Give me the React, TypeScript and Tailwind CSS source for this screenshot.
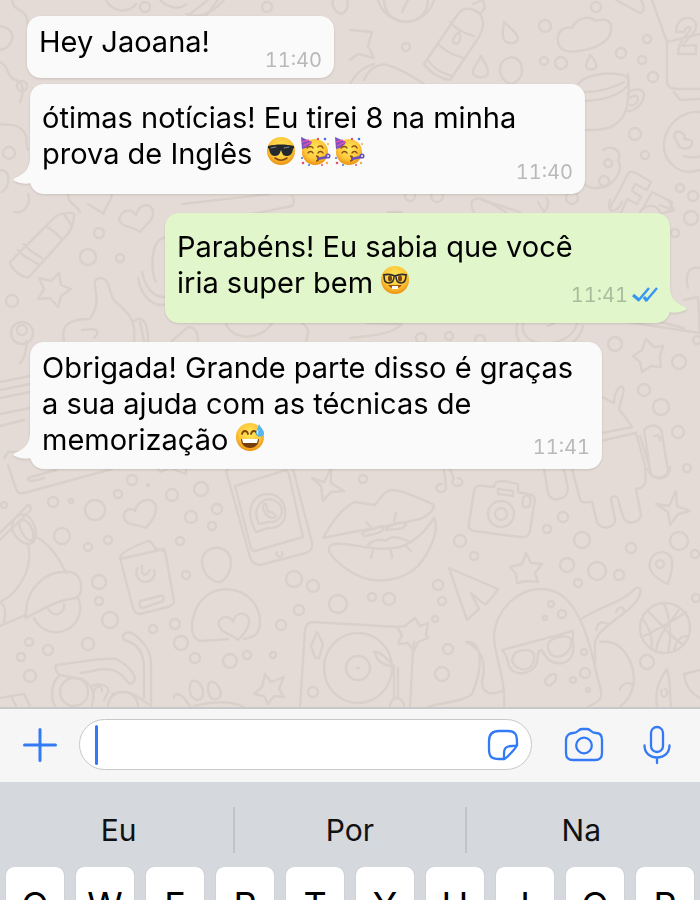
import { ReactNode } from "react";
import clsx from "clsx";

const dots = [
    [145, 7, 5], [267, 7, 5], [22, 86, 5], [9, 153, 6], [596, 7, 5], [545, 26, 6], [406, 47, 4], [544, 61, 4],
    [561, 63, 6], [621, 53, 5], [647, 39, 4], [642, 60, 4], [653, 77, 5], [635, 134, 6], [645, 155, 4],
    [680, 188, 4], [693, 196, 5], [572, 198, 6], [437, 196, 6], [410, 196, 5], [691, 218, 7], [675, 233, 4],
    [615, 344, 7], [679, 362, 7], [644, 390, 6], [661, 407, 8], [678, 432, 6], [687, 468, 4], [421, 338, 5],
    [449, 336, 4], [480, 340, 5], [697, 340, 4], [99, 233, 5], [88, 257, 8], [120, 258, 4], [12, 301, 6],
    [22, 333, 11], [22, 330, 5], [4, 505, 3], [53, 502, 5], [71, 501, 2], [95, 510, 10], [62, 536, 8],
    [88, 547, 4], [108, 540, 4], [118, 494, 4], [132, 480, 5], [148, 485, 1], [172, 495, 6], [201, 489, 7],
    [191, 517, 6], [217, 509, 5], [212, 526, 4], [180, 541, 4], [99, 582, 7], [99, 601, 4], [110, 620, 8],
    [186, 575, 4], [153, 629, 4], [175, 624, 5], [181, 643, 7], [88, 644, 6], [48, 650, 5], [29, 642, 4],
    [21, 657, 4], [30, 676, 6], [195, 658, 5], [230, 661, 7], [247, 655, 4], [273, 655, 3], [294, 579, 8],
    [313, 586, 6], [338, 604, 9], [299, 610, 5], [281, 625, 5], [313, 692, 5], [363, 479, 4], [460, 541, 6],
    [474, 556, 4], [547, 529, 4], [563, 517, 5], [582, 540, 8], [631, 548, 5], [679, 541, 9], [695, 554, 4],
    [567, 565, 7], [578, 583, 4], [597, 571, 9], [619, 575, 5], [372, 597, 4], [389, 599, 6], [438, 585, 5],
    [442, 601, 4], [435, 619, 3], [448, 649, 5], [442, 674, 7], [647, 662, 7], [551, 604, 3], [562, 614, 4],
    [545, 618, 2], [584, 652, 3], [585, 673, 5], [573, 680, 3], [588, 690, 2], [696, 598, 4],
];

const doodles = [
    // top edge: clouds, flames, badge, bottle, drops
    "M12 0c2 12 10 8 14 16s-2 14 8 18 8 14 18 14M0 26c14 2 16 14 6 22L0 50",
    "M0 62c10 4 6 16 16 18 8 2 8 12 4 22M106 0c6 12 22 14 30 4M160 0c8 8 20 10 26 4M190 14l18-14M206 16l12-16",
    "M186 14c10 4 24 2 38-14M333 0c-2 6 2 12 8 14 6-2 8-8 6-14M350 30l22 2-4 14 6 12-16-4-8 6",
    "M378 0a29 29 0 0 0 56 0M384 0a22 22 0 0 0 44 0M402 12l6-12",
    "M424 64l34-50c8-10 24-4 25 8 1 7-3 13-6 18l-27 40c-8-1-20-7-26-16zM428 60c6 10 16 14 24 16M438 44c8 8 18 12 25 14M450 22c7 8 16 12 24 14M473 4l10-4 2 8-4 5M455 44c-5-3 0-9 4-12 2 4 2 12-4 12z",
    "M504 22c6 6 13 10 14 16 0 7-14 7-15-1-1-6 1-10 1-15zM481 56c4 7 7 11 7 16 0 7-15 7-15 0 0-6 6-10 8-16z",
    "M590 55c6 6 7 9 6 12-2 4-9 3-10-1 0-4 3-7 4-11zM500 70c0-16 22-18 22 0 0 8-6 13-11 14-6-2-11-7-11-14z",
    "M350 84c8-14 16-18 24-20M364 80c6-14 18-18 26-14 14 4 24 12 34 18",
    "M558 42c-2-12 8-16 14-14 6-12 18-12 24-7 10-4 16 1 15 8 0 14-18 20-32 22-12 2-20-1-21-9z",
    // cup, jersey, smiley
    "M578 84c6-8 24-12 40-10 12 1 11 8 9 12-8 10-24 14-42 15M628 74c2 12 0 26-1 32-4 18-18 24-34 24h-8M585 92c14 0 28-4 39-10M627 94c6-6 15-6 17 0 0 10-10 18-18 17M630 98c6-4 8-2 8 1 0 4-4 7-8 6",
    "M652 0l15 42v40c0 6 6 7 12 7h21M667 42l33-8M674 92l6 8 20-1M676 32c0-16 17-18 20-8 2 7-8 14-14 22l14-1v9h-18c0-12 8-18 12-24 2-4-4-4-6 2z",
    "M700 112c-32-2-48 38-26 54 8 8 20 6 26 4M676 132c6-2 10 4 8 6s10 0 8 6-12 6-14 0-6-4-2-12M684 156c8 2 12 2 16 0M616 0l22 12c5 3 6-3 5-8l-2-4",
    "M603 150c8-6 20 0 15 11 4 5 2 14-6 21-6 8-26 8-28 0M600 178a5 5 0 1 0 1-1M605 161a4 4 0 1 0 1-1M610 208l18-34c2-4 5-2 10 0l13 8-4 8-12-6-3 7 9 6-4 7-10-5-6 14M642 210l10-18 20 10-2 7-10-4",
    // left side: smoke, pencil, heart, star
    "M0 124c6 2 16-2 22 6 8 6 2 14 6 20M0 170c12 0 10 16 2 22M28 194c4 10-4 20-14 18M68 194c0 10 8 10 12 18M112 194c-2 12-10 16-8 20l-16-10M182 204l88-10M212 222l80-16c3-3 2-8 0-10",
    "M10 262l44-44c4-5 18-6 20-4 1 6-4 18-8 22l-36 40c-4 6-20-8-20-14zM18 250c6 8 14 10 20 14M24 244c6 8 12 10 18 14M46 226c6 4 12 8 16 14M64 214l8 12",
    "M140 232c-8-6-26-6-19-17 4-7 12-5 15 0 4-13 16-12 17-3 1 9-9 14-13 20z",
    "M59 273l2 12 10 4-10 7-3 11-8-9-12 1 6-10-5-11 12 3z",
    "M168 238c-18-4-18 34-12 44M142 272c4 20 16 28 28 24M138 278c4 22 18 30 30 26",
    // raised hand
    "M64 341c-4-18 8-22 26-22 16-24-4-38 10-41 12 0 8 20 16 24 16 14 20 20 18 40M82 330c14-2 20 0 12 8M134 321c8-6 14 0 14 20M140 322l4 19M172 341l16-14c8 0 10 6 10 14",
    "M0 382l30-6M0 390l30-6M0 398l30-6M0 414l30-6M0 426l24-6M4 458l4-6 16 0M26 341c2 14-6 22-6 22",
    // centre strip between bubbles
    "M226 324c6 16 34 18 46-1M306 341c4-10 2-14-4-18M366 323l34 1M350 338c14-2 40-2 52-14M517 324c-8 40 60 34 66 2M523 324c-4 26 46 26 54 0M548 326l6-3",
    "M388 212h14M474 212c-8-14 4-18 18-8l14 8M482 200c12 4 26 8 38 12M538 202l6 10c4-4 6-12 2-14M610 200c-4 14 6 14 12 2M640 212c6-10 18-6 20 0M668 200l6 10-14 4",
    "M688 288c-4-16 2-22 12-20M684 300l14-3 2 36-80-12M644 318l40 10",
    "M646 339l8 8 9-1-3 10 1 11-10-1-9 6-2-10-7-6 9-6z",
    // rabbit + dripping letters
    "M602 397l12 6c0-10 5-18 9-16 3 4-4 18-4 22 4 6 10 12 13 18l-30 6M600 441l36-8 10 36M640 436l10 33M644 430c8-8 18-4 18 4l6 36c0 10-18 10-18 0l-6-40zM654 436c4-2 6 0 6 4",
    "M544 469l4 24c2 10 19 8 20-4l-4-20M572 469l8 30c2 6 8 2 12 3l5 20c4 9 19 6 18-3l-4-20c0-3 6-4 7 0l5 18c4 9 17 6 18-2l-5-26c12-2 10-8 9-20M648 469c2 12 22 14 22-2",
    // box, lifting arm, headset
    "M8 465l8 24c2 6 6 4 12 3l84-23M28 478l28-8M28 478c0 4 4 4 16 0M158 470l4-5M160 472l10-4 16 6 0-9",
    "M0 533c8-8 20-20 28-28 3 0 3 3 2 6L0 540M14 520c-6 10 4 24 16 24 10-4 6-20-2-28-4-4-12 0-14 4zM20 520c-4 4 6 24 12 20 4-6-2-18-8-20zM28 544c6 24-10 50-28 58M38 538c14 8 22 22 28 35M26 618c-2-28 18-46 38-46 14-2 20 10 16 22l-4 4c-18 2-28 8-50 20zM0 626l26-11M34 618a23 23 0 1 0 44-20M48 608a8 8 0 1 0 16-4M0 602c6 4 6 12 4 20",
    // heart, booklet, chat phone
    "M146 528c-8-4-22-2-22-12 0-8 9-8 11-5 2-12 20-16 21-3 0 9-5 13-10 20z",
    "M120 558c0-6 20-14 28-17 5 0 4 4 8 8l9 2 9 50c0 4-4 5-6 6l-28 7c-4 0-6-2-7-6zM120 559l44-10M140 601l20-5c4-2 4 3 3 5l-20 7c-4 0-4-4-3-7zM138 568a9 9 0 1 0 16 2M142 566v7c3 3 6 1 8-3",
    "M226 471l24 86c2 6 6 8 10 8l46-12c7-3 6-6 6-10l-20-78M235 486l48-15c3-2 5 0 6 4l14 62-48 14c-2 0-3-1-4-3l-16-62zM226 471l6-5M256 532c-12-20-4-38 12-38 22 0 24 36 0 34zM259 524c-8-16 4-28 14-24 16 6 8 24-4 22zM264 504c-4 8 8 18 12 12l-4-4-4 0-2-8zM277 552a3 3 0 1 0 5 0",
    "M202 562c0-18 28-20 29 0 0 12-8 20-12 20-6 0-17-8-17-20z",
    "M200 641c-8-2-10-14-6-26 10-38 64-32 66 6 0 14-6 16-16 18M200 641l28-2M238 640c-6-6-22-8-19-19 4-7 12-4 14 1 3-12 16-10 16-1 0 8-6 14-11 19z",
    // sparkle, lips, note, camera
    "M312 478l12 4 7-14v15l13 8-13 1-8 9-2-15z",
    "M323 538c8-14 18-30 32-36l20 3c4-4 8-15 18-15 8 0 36 12 41 15 0 6-8 12-14 14-26 6-64 12-97 19zM330 546c2-4 14-2 22-1 14 2 30 6 48 2 18-6 28-20 34-29 6 12-4 34-16 48-14 14-44 22-70 4-6-4-24-18-18-24zM362 534c4-4 14-6 20-8 4 4-2 8-18 10zM386 528c6-2 12-8 20-4-2 6-10 5-20 6zM368 545c6-6 14-6 18-4 4-6 14-4 22 0M366 522l8 8M394 521l2-8M373 550l-2 8M391 551l1 7M405 545l6 6",
    "M444 469l2 18a5 4 0 1 1-4-3M450 469l4 10a5 4 0 1 0 4-1",
    "M474 491c1-6 6-6 10-5l10 1c0-6 6-6 10-6l14 3v8l14 3c4 2 3 6 2 10l-4 26c-2 7-6 6-10 6l-46-6c-5-1-6-4-5-8zM498 489l15 2v5l-15-2zM488 514a13 13 0 1 0 26 0a13 13 0 1 0-26 0zM495 514a6 6 0 1 0 12 0a6 6 0 1 0-12 0zM523 501a4 4 0 1 0 7 1a4 4 0 1 0-7-1z",
    "M656 504l13 2 7-15 1 15 13 5-12 3-8 11-2-13z",
    // plane, stars, pin, ball
    "M449 568l49 21-4 6-8 9c-4 0-8-6-15-11l8 16-12 11zM526 553l5 10 11 1-7 9 3 9-12-1-9 2-1-9-6-7 12-3z",
    "M415 618l5 8 8-3-2 12 2 3-10 4-4 9-6-8-10 1 4-9-5-8 8-1zM265 674l6 8 13-5-5 12 5 8-10-1-6 8-4-8-10-2 8-7z",
    "M668 584c-6-2-22-12-18-22 2-12 20-14 22-1 1 9-2 16-4 23zM656 564a4 4 0 1 0 8 0a4 4 0 1 0-8 0z",
    "M640 628a25 25 0 1 0 50 0a25 25 0 1 0-50 0zM648 611c14 14 24 28 36 34M644 636c16-8 34-18 42-24M664 604c6 12 8 30 4 48M680 608c-8 14-22 24-24 44M642 618c8 10 10 18 10 28M674 650c2-10 8-14 14-14",
    // turntable
    "M300 707l5-77c1-6 4-8 8-8l85 5M410 707l3-57 1-8M324 668a33 34 0 1 0 68 0a33 34 0 1 0-68 0zM346 668a12 12 0 1 0 24 0a12 12 0 1 0-24 0zM357 668h2M317 632l6 12-4 14h-4l-4-12zM374 652c6-2 14 8 20 14v32M398 668v30M376 652c-2 6 6 14 18 14M390 707c0-12 14-12 14 0",
    // octopus with glasses
    "M504 707c2-30-10-50-10-72 2-24 22-46 48-46 30 0 44 36 54 82 2 12 8 22 4 28-4 4-8 6-12 8M580 620c20-14 40-16 56-32 8-2 4 8 0 14-14 16-36 24-41 40v20M600 642c22-4 34 20 34 38-2 14-6 20-14 27M504 690c-12 6-22 4-22-8 4-16 2-32-16-40 16-2 18 24 6 52-8 8-30 8-44 13M596 630c2-10 8-8 12-6M616 612c2-6 8-6 8-1M620 690c2-8 10-8 14-5",
    "M502 650l71-19v10c2 12-2 20-10 22-12 2-18-6-21-13-4 0-4 4-5 12-2 12-24 16-28 4-2-8-3-12-7-16zM514 654c6-5 20-6 20 2 2 16-18 18-22 4zM548 644c4-8 22-10 23-4 2 16-20 24-23 8zM545 680c4-6 12-8 11-3 0 6-10 14-11 3zM667 669c-10 14-12 24-10 38M667 669c4 12 2 24 4 38M662 690a3 4 0 1 0 3-1M684 674l16-4M684 674c2 14 8 20 16 24",
    // tools, paw
    "M56 665c20-2 46-8 60-6 12 6 18 14 19 20-2 6-6 6-8 2-8-10-14-12-24-12l-22 4M56 665c-2 6 4 10 4 10-12 10-8 28-4 32M60 675l22 4c10 6 10 10 12 18M60 692a14 14 0 1 0 28 0a14 14 0 1 0-28 0zM92 686c8-4 18 0 16 6l-4 8M92 707l2-16c2-6 8-6 8 0M124 640c-4-8 6-10 12-4 10 8 15 16 15 28v43M124 640c16 4 20 16 20 28v30M108 707c0-20 30-20 30 0M112 694c18-6 24 2 36 10",
    "M174 698c0-6 6-4 10 0l6 8M190 686c0-8 8-6 11 0 4 6 2 14-4 14-6-2-8-8-7-14zM208 688c0-8 6-8 10-2s4 12-2 13-8-5-8-11zM194 706c16-4 36-6 50 1M0 698l24-4 6 12M12 698l4 8",
];

const Wallpaper = () => (
    <svg
        className="absolute inset-0 w-full h-full"
        viewBox="0 0 700 707"
        preserveAspectRatio="xMidYMin slice"
        fill="none"
        stroke="#d9d0ca"
        strokeWidth="2.4"
        strokeLinecap="round"
        strokeLinejoin="round"
        aria-hidden="true"
    >
        {dots.map(([x, y, r]) => (
            <circle key={`${x}-${y}-${r}`} cx={x} cy={y} r={r} />
        ))}
        {doodles.map((d) => (
            <path key={d} d={d} />
        ))}
    </svg>
);

type EmojiName = "cool" | "party" | "nerd" | "sweat";

const emojiLabels = {
    cool: "óculos de sol",
    party: "festa",
    nerd: "nerd",
    sweat: "suor frio",
};

const Emoji = ({ name }: { name: EmojiName }) => (
    <svg
        className="inline-block w-7 h-7 align-[-1px] overflow-visible"
        viewBox="3 3 28 28"
        role="img"
        aria-label={emojiLabels[name]}
    >
        <defs>
            <radialGradient id={`face-${name}`} cx="50%" cy="38%" r="60%">
                <stop offset="0" stopColor="#ffe75b" />
                <stop offset="0.65" stopColor="#fdc93a" />
                <stop offset="1" stopColor="#ee9415" />
            </radialGradient>
        </defs>
        <circle cx="17" cy={name === "party" ? 18 : 17} r={name === "party" ? 13 : 14} fill={`url(#face-${name})`} />
        {name === "cool" && (
            <>
                <path d="M4 12c8-2 18-2 26 0v2l-1 1c-1 6-3 7-7 7-3 0-4-3-5-6-1 3-2 6-6 6-4 0-5-3-6-7l-1-1z" fill="#25292d" />
                <path d="M7 14l5-1M20 14l5-1" stroke="#7f878c" strokeWidth="1" strokeLinecap="round" />
                <path d="M11 24c4 3 8 3 12 0" fill="none" stroke="#88480b" strokeWidth="1.6" strokeLinecap="round" />
            </>
        )}
        {name === "party" && (
            <>
                <path d="M3 3l11 5c-1 3-5 6-10 7z" fill="#7652bf" />
                <path d="M4 8l7-2M5 12l8-4" stroke="#e14fb0" strokeWidth="1.4" />
                <path d="M9 14c2-2 5-2 6 0M20 13c2-2 4-1 5 1M10 19c1-2 4-2 5 0M20 19c1-2 4-2 5 0" fill="none" stroke="#8b4a10" strokeWidth="1.4" strokeLinecap="round" />
                <path d="M18 22c3 0 3 2 1 2 3 0 2 3-1 3" fill="none" stroke="#8b4a10" strokeWidth="1.4" />
                <path d="M19 25l10-2" stroke="#6850bd" strokeWidth="2.4" />
                <circle cx="30" cy="22" r="1.8" fill="none" stroke="#6850bd" strokeWidth="1.5" />
                <g fill="#e3506f">
                    <circle cx="20" cy="5" r="1.2" />
                    <circle cx="5" cy="29" r="1.3" />
                    <circle cx="24" cy="31" r="1" />
                </g>
                <g fill="#3f75df">
                    <circle cx="27" cy="5" r="1.3" />
                    <circle cx="4" cy="24" r="1" />
                    <circle cx="11" cy="31" r="1" />
                </g>
                <circle cx="30" cy="10" r="1" fill="#f6a93c" />
                <circle cx="29" cy="29" r="1.2" fill="#f6a93c" />
            </>
        )}
        {name === "nerd" && (
            <>
                <ellipse cx="12" cy="15.500" rx="2" ry="3" fill="#7b410e" />
                <ellipse cx="22" cy="15.500" rx="2" ry="3" fill="#7b410e" />
                <path d="M10 22c4 5 10 5 14 0z" fill="#a0520f" />
                <path d="M14 23h6v3h-6z" fill="#ffffff" />
                <path d="M5 12c4-1 8-1 12 1 4-2 8-2 12-1M6 12c0 6 1 8 5 8s5-3 5-7M18 13c0 4 1 7 5 7s5-3 5-8" fill="none" stroke="#2c2d2b" strokeWidth="1.6" />
            </>
        )}
        {name === "sweat" && (
            <>
                <path d="M9 14c1-4 5-4 6 0M18 14c1-4 5-4 6 0" fill="none" stroke="#7c430e" strokeWidth="1.8" strokeLinecap="round" />
                <path d="M8 19h18c0 12-18 12-18 0z" fill="#793d0c" />
                <path d="M9 19h16l-1 4H10z" fill="#ffffff" />
                <path d="M26 4c2 4 5 6 5 9 0 5-8 5-8 0 0-3 2-5 3-9z" fill="#57b6ee" />
                <path d="M25 10c-1 2-1 3 0 4" stroke="#c9efff" strokeWidth="1.2" fill="none" />
            </>
        )}
    </svg>
);

const Tail = ({ side }: { side: "left" | "right" }) => (
    <svg
        className={clsx(
            "absolute bottom-2 w-6 h-7",
            side === "left" ? "-left-[17px]" : "-right-[17px] -scale-x-100"
        )}
        viewBox="0 0 24 28"
        aria-hidden="true"
    >
        <path
            d="M17 0C17 10 12 16 2 20C-1 22 1 23 4 24C9 26 14 26 18 25L24 28V0Z"
            fill={side === "left" ? "#fafafa" : "#e1f6ca"}
        />
    </svg>
);

type MessageProps = {
    time: string;
    className: string;
    textClassName: string;
    timeClassName: string;
    tail?: boolean;
    sent?: boolean;
    children: ReactNode;
};

const Message = ({ time, className, textClassName, timeClassName, tail, sent, children }: MessageProps) => (
    <li
        className={clsx(
            "relative grid max-w-full rounded-[14px] drop-shadow-[0_1px_1px_rgba(0,0,0,0.12)]",
            sent ? "self-end bg-[#e1f6ca]" : "self-start bg-[#fafafa]",
            className
        )}
    >
        {tail && <Tail side={sent ? "right" : "left"} />}
        <p className={clsx("relative col-start-1 row-start-1 px-3 text-[29px] leading-9 text-black", textClassName)}>
            {children}
        </p>
        <span
            className={clsx(
                "relative col-start-1 row-start-1 self-end justify-self-end flex items-center gap-1 pr-3 text-xl leading-5 tabular-nums",
                sent ? "text-[#abbb9d]" : "text-[#b9b9b9]",
                timeClassName
            )}
        >
            <time>{time}</time>
            {sent && (
                <svg className="w-[26px] h-4" viewBox="0 0 26 16" fill="none" stroke="#3797f5" aria-label="Lida" role="img">
                    <path d="M1 8l6 5M12 10l3 4" strokeWidth="3.2" />
                    <path d="M6 14L17 1M14 14L25 1" strokeWidth="2.4" />
                </svg>
            )}
        </span>
    </li>
);

const suggestions = ["Eu", "Por", "Na"];
const keys = ["Q", "W", "E", "R", "T", "Y", "U", "I", "O", "P"];

const App = () => {
    return (
        <div className="flex flex-col h-screen overflow-hidden bg-[#d5d8dd] font-['Inter','Liberation_Sans',sans-serif]">
            <main className="relative flex-1 min-h-0 overflow-hidden bg-[#e5dbd6]">
                <Wallpaper />
                <ul className="relative flex flex-col px-[30px] pt-4">
                    <Message time="11:40" className="-ml-[3px] w-[307px]" textClassName="pt-2 pb-[18px]" timeClassName="pb-2">
                        Hey Jaoana!
                    </Message>
                    <Message time="11:40" tail className="mt-1.5 w-[555px]" textClassName="pt-4 pb-[22px]" timeClassName="pb-3">
                        ótimas notícias! Eu tirei 8 na minha
                        <br />
                        prova de Inglês{" "}
                        <span className="inline-flex gap-1.5 ml-1.5 align-[-1px]">
                            <Emoji name="cool" />
                            <Emoji name="party" />
                            <Emoji name="party" />
                        </span>
                    </Message>
                    <Message time="11:41" tail sent className="mt-[19px] w-[505px]" textClassName="pt-4 pb-[22px]" timeClassName="pb-[18px]">
                        Parabéns! Eu sabia que você
                        <br />
                        iria super bem <Emoji name="nerd" />
                    </Message>
                    <Message time="11:41" tail className="mt-[19px] w-[572px]" textClassName="pt-2 pb-[11px]" timeClassName="pb-3">
                        Obrigada! Grande parte disso é graças
                        <br />
                        a sua ajuda com as técnicas de
                        <br />
                        memorização <Emoji name="sweat" />
                    </Message>
                </ul>
            </main>

            <form className="flex items-center shrink-0 h-[75px] pb-0.5 border-t-2 border-[#c8c8c8] bg-[#f6f6f6] text-[#347af6]">
                <button type="button" aria-label="Anexar" className="shrink-0 w-[79px] pl-[22px]">
                    <svg className="w-9 h-9" viewBox="0 0 36 36" fill="none" stroke="currentColor" strokeWidth="3" strokeLinecap="round">
                        <path d="M2.500 18h31M18 2.500v31" />
                    </svg>
                </button>
                <div className="flex items-center flex-1 min-w-0 h-[51px] pl-[15px] pr-3 rounded-full border border-[#c8c8c8] bg-white">
                    <span className="shrink-0 w-[3px] h-10 rounded-full bg-[#347af6]" />
                    <input type="text" aria-label="Mensagem" className="flex-1 min-w-0 h-full pl-1 text-[29px] text-black outline-none" />
                    <button type="button" aria-label="Figurinhas" className="shrink-0">
                        <svg className="w-8 h-8" viewBox="0 0 32 32" fill="none" stroke="currentColor" strokeWidth="2.300" strokeLinecap="round" strokeLinejoin="round">
                            <path d="M17 30h-5C4 30 2 27 2 20v-8C2 5 5 2 12 2h8c8 0 10 3 10 11v3c0 2-11 14-13 14z" />
                            <path d="M17 30v-5c0-6 2-8 8-8 3 0 4 0 5-1" />
                        </svg>
                    </button>
                </div>
                <button type="button" aria-label="Câmera" className="shrink-0 ml-8">
                    <svg className="w-10 h-10" viewBox="0 0 40 40" fill="none" stroke="currentColor" strokeWidth="2.300" strokeLinejoin="round">
                        <path d="M9 8c3 0 4-1 5-2 1-1 2-2 4-2h5c2 0 3 1 4 2s2 2 5 2c4 0 6 3 6 7v13c0 5-2 7-7 7H9c-5 0-7-2-7-7V15c0-4 3-7 7-7z" />
                        <circle cx="20" cy="20.500" r="7.800" />
                    </svg>
                </button>
                <button type="button" aria-label="Gravar áudio" className="shrink-0 ml-[38px] mr-7">
                    <svg className="w-[30px] h-10" viewBox="0 0 30 40" fill="none" stroke="currentColor" strokeWidth="2.300" strokeLinecap="round">
                        <rect x="9" y="2" width="12" height="25" rx="6" />
                        <path d="M2.500 20.500c0 7 5 12 12.500 12s12.500-5 12.500-12M15 33v5" />
                    </svg>
                </button>
            </form>

            <section aria-label="Teclado" className="shrink-0 bg-[#d5d8dd]">
                <div className="flex items-center h-[85px] px-1 pt-2.5">
                    {suggestions.map((word, index) => (
                        <button
                            key={word}
                            type="button"
                            className={clsx("flex-1 h-[46px] text-3xl leading-9 text-[#111111]", index > 0 && "border-l-2 border-[#c0c3c8]")}
                        >
                            {word}
                        </button>
                    ))}
                </div>
                <div className="flex items-start gap-3 h-[33px] px-1.5 overflow-hidden">
                    {keys.map((key) => (
                        <button
                            key={key}
                            type="button"
                            className="flex-1 h-[76px] rounded-lg bg-white shadow-[0_0_1px_rgba(0,0,0,0.25)] text-4xl leading-[76px] text-black"
                        >
                            {key}
                        </button>
                    ))}
                </div>
            </section>
        </div>
    );
};

export default App;
